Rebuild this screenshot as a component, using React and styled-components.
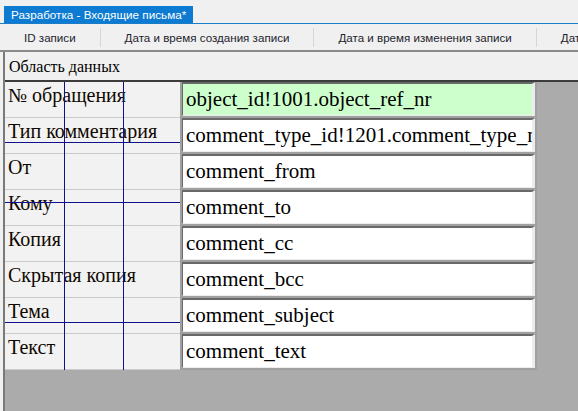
import React from "react";
import styled, { createGlobalStyle } from "styled-components";

const columns = [
  "ID записи",
  "Дата и время создания записи",
  "Дата и время изменения записи",
  "Дата и время удаления записи",
];

const fields = [
  { label: "№ обращения", value: "object_id!1001.object_ref_nr", key: true },
  { label: "Тип комментария", value: "comment_type_id!1201.comment_type_nr" },
  { label: "От", value: "comment_from" },
  { label: "Кому", value: "comment_to" },
  { label: "Копия", value: "comment_cc" },
  { label: "Скрытая копия", value: "comment_bcc" },
  { label: "Тема", value: "comment_subject" },
  { label: "Текст", value: "comment_text" },
];

const guidesX = [59, 118];
const guidesY = [60, 120, 240];

const serif = `"Liberation Serif", "DejaVu Serif", "Noto Serif", serif`;
const ui = `"Liberation Sans", "Noto Sans", sans-serif`;

export default function App() {
  return (
    <>
      <GlobalStyle />
      <Window>
        <TabStrip>
          <Tab>Разработка - Входящие письма*</Tab>
        </TabStrip>
        <HeaderBar>
          {columns.map((c) => (
            <HeaderCell key={c}>{c}</HeaderCell>
          ))}
        </HeaderBar>
        <Designer>
          <SectionTitle>Область данных</SectionTitle>
          <FormArea>
            <Form>
              <LabelColumn>
                {fields.map((f) => (
                  <Label key={f.label}>{f.label}</Label>
                ))}
                {guidesX.map((x) => (
                  <GuideV key={x} style={{ left: x }} />
                ))}
                {guidesY.map((y) => (
                  <GuideH key={y} style={{ top: y }} />
                ))}
              </LabelColumn>
              <FieldColumn>
                {fields.map((f) => (
                  <FieldRow key={f.value}>
                    <Input $key={f.key}>{f.value}</Input>
                  </FieldRow>
                ))}
              </FieldColumn>
            </Form>
          </FormArea>
        </Designer>
      </Window>
    </>
  );
}

const GlobalStyle = createGlobalStyle`
  html, body {
    margin: 0;
    padding: 0;
    background: #f0f0f0;
    overflow: hidden;
  }
`;

const Window = styled.div`
  height: 100vh;
  display: flex;
  flex-direction: column;
  background: #f0f0f0;
`;

const TabStrip = styled.div`
  height: 23px;
  display: flex;
  align-items: flex-end;
  border-bottom: 1px solid #1a7dc8;
`;

const Tab = styled.div`
  margin-left: 4px;
  height: 17px;
  line-height: 17px;
  padding: 0 7px;
  background: #0e7bd2;
  color: #fff;
  font-family: ${ui};
  font-size: 11.7px;
  white-space: nowrap;
`;

const HeaderBar = styled.div`
  height: 26px;
  display: flex;
  align-items: center;
  overflow: hidden;
  border-bottom: 2px solid #8a8a8a;
`;

const HeaderCell = styled.div`
  flex: none;
  height: 19px;
  line-height: 19px;
  padding: 0 24px;
  border-right: 1px solid #d6d6d6;
  white-space: nowrap;
  font-family: ${ui};
  font-size: 11.6px;
  color: #1e1e2e;
`;

const Designer = styled.div`
  flex: 1;
  display: flex;
  flex-direction: column;
  margin-left: 3px;
  border-left: 2px solid #7a7a7a;
  min-height: 0;
`;

const SectionTitle = styled.div`
  height: 28px;
  line-height: 30px;
  padding-left: 4px;
  font-family: ${serif};
  font-size: 16px;
  color: #000;
`;

const FormArea = styled.div`
  flex: 1;
  background: #ababab;
  border-top: 2px solid #3c3c3c;
`;

const Form = styled.div`
  display: flex;
  align-items: flex-start;
  width: 532px;
`;

const LabelColumn = styled.div`
  position: relative;
  flex: 0 0 175px;
  background: #f2f2f2;
`;

const Label = styled.div`
  height: 35px;
  border-bottom: 1px solid #cbcbcb;
  padding-left: 3px;
  line-height: 26px;
  font-family: ${serif};
  font-size: 20px;
  color: #100800;
  white-space: nowrap;
  overflow: hidden;
`;

const GuideV = styled.div`
  position: absolute;
  top: 0;
  bottom: 0;
  width: 1px;
  background: #10108c;
`;

const GuideH = styled.div`
  position: absolute;
  left: 0;
  right: 0;
  height: 1px;
  background: #10108c;
`;

const FieldColumn = styled.div`
  flex: 1;
  min-width: 0;
  border-left: 2px solid #a0a0a0;
`;

const FieldRow = styled.div`
  height: 36px;
  box-sizing: border-box;
  padding: 0 2px 2px 0;
  background: #a0a0a0;
`;

const Input = styled.div`
  height: 34px;
  box-sizing: border-box;
  border-top: 2px solid #696969;
  border-left: 1px solid #696969;
  border-right: 3px solid #ececec;
  border-bottom: 1px solid #ececec;
  background: ${(p) => (p.$key ? "#ccffcc" : "#fff")};
  padding-left: 3px;
  line-height: 31px;
  font-family: ${serif};
  font-size: 21px;
  color: #000;
  white-space: nowrap;
  overflow: hidden;
`;
